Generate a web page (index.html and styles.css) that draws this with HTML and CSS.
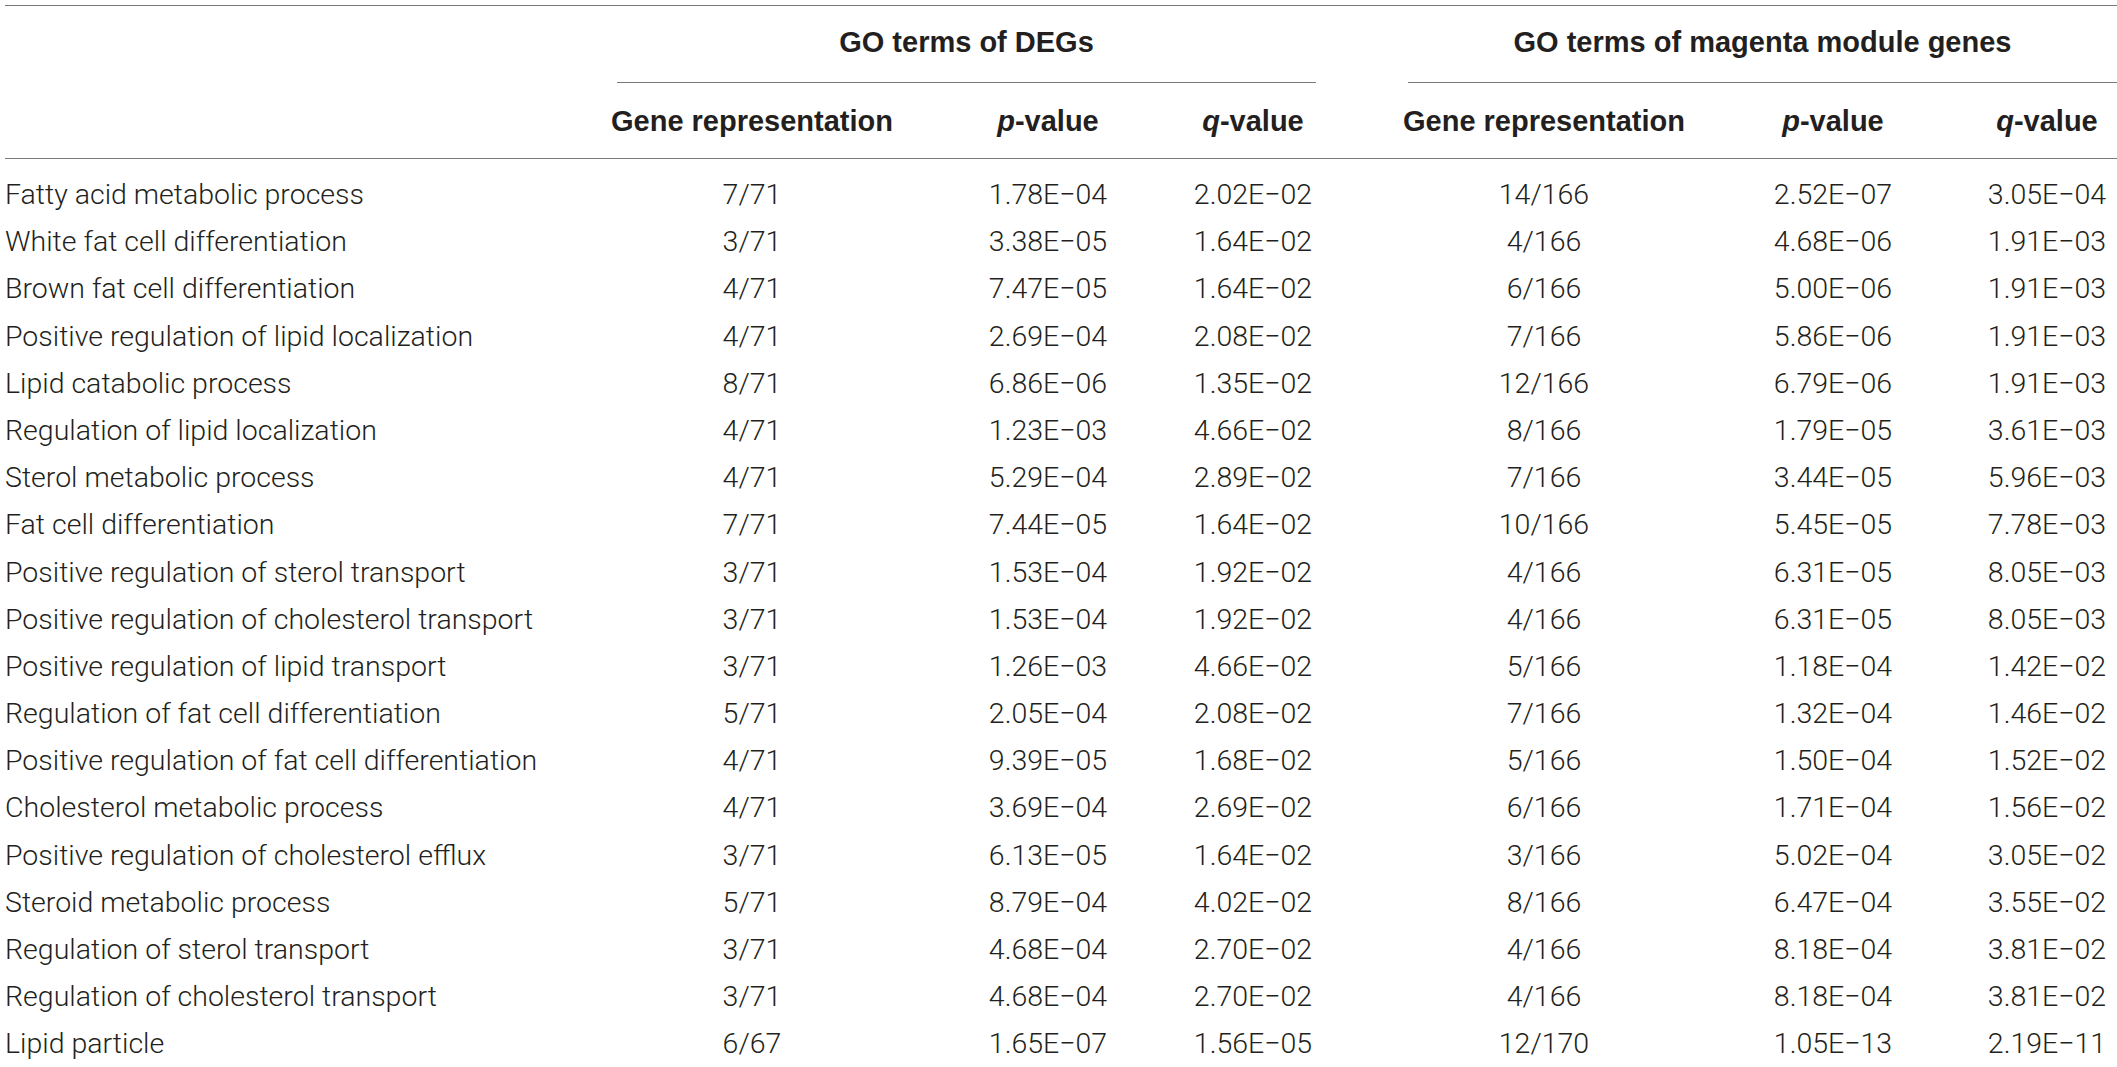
FILE: index.html
```html
<!DOCTYPE html>
<html lang="en">

<head>
    <meta charset="UTF-8">
    <title>GO terms</title>
    <link rel="stylesheet" href="styles.css">
</head>

<body>

    <div class="go-table">
        <div class="grid head">
            <div class="label-head"></div>
            <div class="group group-degs">GO terms of DEGs</div>
            <div class="group group-magenta">GO terms of magenta module genes</div>

            <div class="col-head"></div>
            <div class="col-head c1">Gene representation</div>
            <div class="col-head c2"><i>p</i>-value</div>
            <div class="col-head c3"><i>q</i>-value</div>
            <div class="col-head c4">Gene representation</div>
            <div class="col-head c5"><i>p</i>-value</div>
            <div class="col-head c6"><i>q</i>-value</div>
        </div>

        <div class="grid rows" id="rows"></div>
    </div>

    <script>
        const rows = [
            ["Fatty acid metabolic process", "7/71", "1.78E−04", "2.02E−02", "14/166", "2.52E−07", "3.05E−04"],
            ["White fat cell differentiation", "3/71", "3.38E−05", "1.64E−02", "4/166", "4.68E−06", "1.91E−03"],
            ["Brown fat cell differentiation", "4/71", "7.47E−05", "1.64E−02", "6/166", "5.00E−06", "1.91E−03"],
            ["Positive regulation of lipid localization", "4/71", "2.69E−04", "2.08E−02", "7/166", "5.86E−06", "1.91E−03"],
            ["Lipid catabolic process", "8/71", "6.86E−06", "1.35E−02", "12/166", "6.79E−06", "1.91E−03"],
            ["Regulation of lipid localization", "4/71", "1.23E−03", "4.66E−02", "8/166", "1.79E−05", "3.61E−03"],
            ["Sterol metabolic process", "4/71", "5.29E−04", "2.89E−02", "7/166", "3.44E−05", "5.96E−03"],
            ["Fat cell differentiation", "7/71", "7.44E−05", "1.64E−02", "10/166", "5.45E−05", "7.78E−03"],
            ["Positive regulation of sterol transport", "3/71", "1.53E−04", "1.92E−02", "4/166", "6.31E−05", "8.05E−03"],
            ["Positive regulation of cholesterol transport", "3/71", "1.53E−04", "1.92E−02", "4/166", "6.31E−05", "8.05E−03"],
            ["Positive regulation of lipid transport", "3/71", "1.26E−03", "4.66E−02", "5/166", "1.18E−04", "1.42E−02"],
            ["Regulation of fat cell differentiation", "5/71", "2.05E−04", "2.08E−02", "7/166", "1.32E−04", "1.46E−02"],
            ["Positive regulation of fat cell differentiation", "4/71", "9.39E−05", "1.68E−02", "5/166", "1.50E−04", "1.52E−02"],
            ["Cholesterol metabolic process", "4/71", "3.69E−04", "2.69E−02", "6/166", "1.71E−04", "1.56E−02"],
            ["Positive regulation of cholesterol efflux", "3/71", "6.13E−05", "1.64E−02", "3/166", "5.02E−04", "3.05E−02"],
            ["Steroid metabolic process", "5/71", "8.79E−04", "4.02E−02", "8/166", "6.47E−04", "3.55E−02"],
            ["Regulation of sterol transport", "3/71", "4.68E−04", "2.70E−02", "4/166", "8.18E−04", "3.81E−02"],
            ["Regulation of cholesterol transport", "3/71", "4.68E−04", "2.70E−02", "4/166", "8.18E−04", "3.81E−02"],
            ["Lipid particle", "6/67", "1.65E−07", "1.56E−05", "12/170", "1.05E−13", "2.19E−11"]
        ];

        const rowsContainer = document.getElementById("rows");

        rows.forEach(row => {
            row.forEach((value, i) => {
                const cell = document.createElement("div");
                cell.className = i === 0 ? "cell label" : "cell c" + i;
                cell.textContent = value;
                rowsContainer.appendChild(cell);
            });
        });
    </script>

</body>

</html>
```

FILE: styles.css
```css
* {
    margin: 0;
    padding: 0;
    box-sizing: border-box;
}

body {
    background-color: #ffffff;
    color: #231f20;
    font-family: Roboto, "Liberation Sans", sans-serif;
}

.go-table {
    width: 2117px;
    margin-top: 5px;
}

.grid {
    display: grid;
    grid-template-columns: 604px 296px 250px 249px 290px 251px 177px;
}

.head {
    border-top: 1px solid #7a7a7a;
    margin-left: 5px;
    grid-template-columns: 599px 296px 250px 249px 290px 251px 177px;
}

.head div {
    font-family: "Liberation Sans", Arial, sans-serif;
    font-weight: 700;
    font-size: 29px;
    display: flex;
    align-items: center;
    justify-content: center;
}

.label-head {
    height: 77px;
}

.group {
    height: 77px;
    padding-bottom: 4px;
    border-bottom: 1px solid #7a7a7a;
}

.group-degs {
    grid-column: 2 / span 3;
    margin-left: 13px;
    margin-right: 83px;
}

.group-magenta {
    grid-column: 5 / span 3;
    margin-left: 9px;
}

.head .col-head {
    height: 75px;
    border-bottom: 1px solid #7a7a7a;
    margin-top: 1px;
}

.rows {
    padding-top: 12px;
}

.cell {
    height: 47.2px;
    line-height: 47.2px;
    font-size: 28.5px;
    font-weight: 300;
    text-align: center;
    white-space: nowrap;
}

.cell.label {
    text-align: left;
    padding-left: 5px;
}

/* shift the centred values to where the columns sit */
.c2 {
    padding-left: 46px;
}

.c3 {
    padding-right: 43px;
}

.c5,
.c6 {
    padding-left: 37px;
}

.head .c2 {
    padding-left: 46px;
}

.head .c3 {
    padding-right: 43px;
}

.head .c5,
.head .c6 {
    padding-left: 37px;
}
```
